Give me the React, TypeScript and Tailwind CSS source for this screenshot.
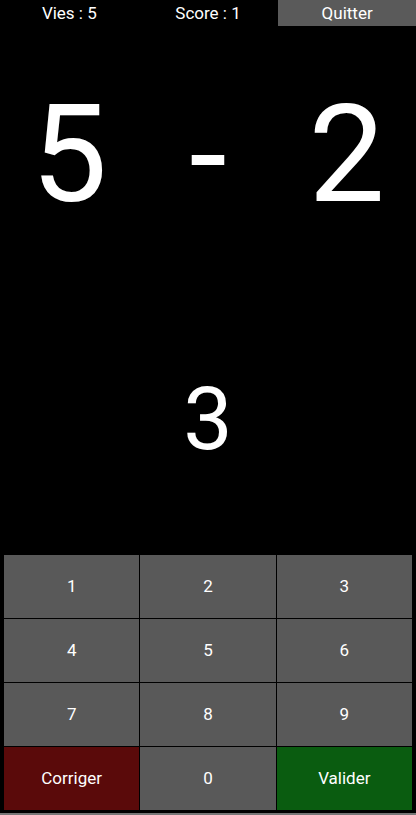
const KEYS = ['1', '2', '3', '4', '5', '6', '7', '8', '9']

export default function App() {
  return (
    <div className="flex h-[815px] w-[416px] flex-col bg-black text-white" style={{ fontFamily: 'Roboto, sans-serif' }}>
      {/* Barre du haut */}
      <div className="grid h-[26px] grid-cols-3 text-[17px] leading-[26px]">
        <div className="text-center">Vies : 5</div>
        <div className="text-center">Score : 1</div>
        <button className="ml-[1px] bg-[#5a5a5a] text-center">Quitter</button>
      </div>

      {/* Opération */}
      <div className="grid h-[258px] grid-cols-3 items-center text-[136px] leading-none">
        <div className="text-center">5</div>
        <div className="text-center">-</div>
        <div className="text-center">2</div>
      </div>

      {/* Réponse */}
      <div className="flex h-[270px] items-center justify-center text-[88px] leading-none">3</div>

      {/* Pavé numérique */}
      <div className="mx-[3px] grid grid-cols-3 gap-px border border-black bg-black text-[17px]">
        {KEYS.map(k => (
          <button key={k} className="h-[63px] bg-[#595959] text-white">{k}</button>
        ))}
        <button className="h-[63px] bg-[#5a0a0a] text-white">Corriger</button>
        <button className="h-[63px] bg-[#595959] text-white">0</button>
        <button className="h-[63px] bg-[#0a5c10] text-white">Valider</button>
      </div>
      <div className="flex-1" />
      <div className="h-[2px] bg-[#777]" />
    </div>
  )
}
